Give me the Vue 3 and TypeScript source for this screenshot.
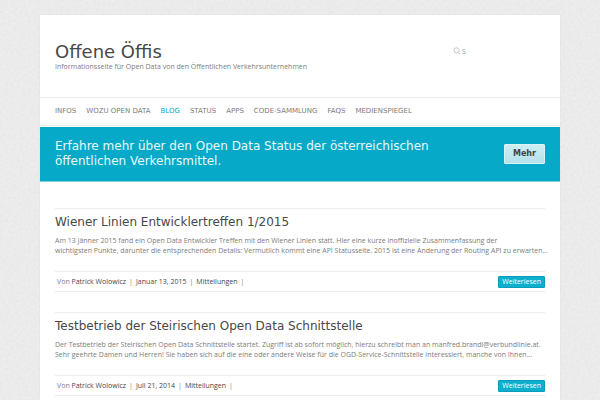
<script setup lang="ts">
import { ref } from 'vue'

interface NavItem {
  label: string
  active?: boolean
}

interface Post {
  title: string
  lines: string[]
  author: string
  date: string
  category: string
}

const query = ref('')

const nav: NavItem[] = [
  { label: 'Infos' },
  { label: 'Wozu Open Data' },
  { label: 'Blog', active: true },
  { label: 'Status' },
  { label: 'Apps' },
  { label: 'Code-Sammlung' },
  { label: 'FAQs' },
  { label: 'Medienspiegel' },
]

const posts: Post[] = [
  {
    title: 'Wiener Linien Entwicklertreffen 1/2015',
    lines: [
      'Am 13 Jänner 2015 fand ein Open Data Entwickler Treffen mit den Wiener Linien statt. Hier eine kurze inoffizielle Zusammenfassung der',
      'wichtigsten Punkte, darunter die entsprechenden Details: Vermutlich kommt eine API Statusseite. 2015 ist eine Änderung der Routing API zu erwarten…',
    ],
    author: 'Patrick Wolowicz',
    date: 'Januar 13, 2015',
    category: 'Mitteilungen',
  },
  {
    title: 'Testbetrieb der Steirischen Open Data Schnittstelle',
    lines: [
      'Der Testbetrieb der Steirischen Open Data Schnittstelle startet. Zugriff ist ab sofort möglich, hierzu schreibt man an manfred.brandl@verbundlinie.at.',
      'Sehr geehrte Damen und Herren! Sie haben sich auf die eine oder andere Weise für die OGD-Service-Schnittstelle interessiert, manche von Ihnen…',
    ],
    author: 'Patrick Wolowicz',
    date: 'Juli 21, 2014',
    category: 'Mitteilungen',
  },
]
</script>

<template>
  <div class="backdrop">
    <svg class="paper" aria-hidden="true">
      <filter id="grain" x="0" y="0" width="100%" height="100%" color-interpolation-filters="sRGB">
        <feTurbulence type="fractalNoise" baseFrequency="0.35" numOctaves="2" seed="4" />
        <feColorMatrix values="0.04 0 0 0 0.9  0.04 0 0 0 0.9  0.04 0 0 0 0.9  0 0 0 0 1" />
      </filter>
      <rect width="100%" height="100%" filter="url(#grain)" />
    </svg>
    <div class="page">
      <header class="masthead">
        <div>
          <h1><a href="#">Offene Öffis</a></h1>
          <p class="tagline">Informationsseite für Open Data von den Öffentlichen Verkehrsunternehmen</p>
        </div>
        <form class="search" role="search" @submit.prevent>
          <label for="search">
            <svg viewBox="0 0 8 8" aria-label="Suche">
              <circle cx="3.5" cy="3.4" r="2.6" />
              <path d="M5.3 5.4 7 7.3" />
            </svg>
          </label>
          <input id="search" v-model="query" type="text" placeholder="S" />
        </form>
      </header>

      <nav class="menu">
        <a v-for="item in nav" :key="item.label" href="#" :class="{ active: item.active }">{{ item.label }}</a>
      </nav>

      <section class="banner">
        <p>Erfahre mehr über den Open Data Status der österreichischen öffentlichen Verkehrsmittel.</p>
        <a class="more" href="#">Mehr</a>
      </section>

      <main>
        <article v-for="post in posts" :key="post.title">
          <h2><a href="#">{{ post.title }}</a></h2>
          <p class="excerpt">
            <span v-for="line in post.lines" :key="line">{{ line }}</span>
          </p>
          <footer>
            <div class="meta">
              <span>Von <a href="#">{{ post.author }}</a></span>
              <i>|</i>
              <a href="#">{{ post.date }}</a>
              <i>|</i>
              <a href="#">{{ post.category }}</a>
              <i>|</i>
            </div>
            <a class="read" href="#">Weiterlesen</a>
          </footer>
        </article>
      </main>
    </div>
  </div>
</template>

<style>
body {
  background: #ebebeb;
}
</style>

<style scoped>
.backdrop {
  position: relative;
  display: flow-root;
  min-height: 100vh;
  box-sizing: border-box;
  padding: 15px 40px 0;
  font-family: 'Open Sans', 'DejaVu Sans', sans-serif;
  font-size: 7px;
  color: #7c7c7c;
}
.paper {
  position: absolute;
  inset: 0;
  width: 100%;
  height: 100%;
}
.page {
  position: relative;
  min-height: 385px;
  background: #fff;
  box-shadow: 0 0 2px rgba(0, 0, 0, 0.05);
}
a {
  color: inherit;
  text-decoration: none;
}
h1,
h2,
p {
  margin: 0;
  font-weight: normal;
}
h1,
h2,
.menu,
.banner {
  font-family: 'DejaVu Sans', sans-serif;
}
.masthead {
  display: flex;
  justify-content: space-between;
  padding: 26px 15px 26px;
}
h1 {
  font-size: 18px;
  line-height: 21px;
  color: #484848;
}
.tagline {
  line-height: 9px;
}
.search {
  display: flex;
  align-items: center;
  gap: 1px;
  width: 92px;
  height: 20px;
}
.search label {
  display: flex;
}
.search svg {
  width: 8px;
  height: 8px;
  fill: none;
  stroke: #bbb;
  stroke-width: 0.8;
}
.search input {
  width: 24px;
  padding: 0;
  border: 0;
  background: none;
  font: inherit;
  color: #777;
}
.search input::placeholder {
  color: #999;
}
.menu {
  display: flex;
  gap: 10px;
  padding: 0 15px;
  border-top: 1px solid #ececec;
  border-bottom: 1px solid #ececec;
  line-height: 27px;
  text-transform: uppercase;
}
.menu .active {
  color: #06a9c8;
}
.banner {
  display: flex;
  align-items: center;
  justify-content: space-between;
  margin-top: 1px;
  padding: 12px 15px;
  background: #06a9c8;
  border-bottom: 1px solid #7fd0e0;
  color: #e8f9fc;
}
.banner p {
  max-width: 380px;
  font-size: 12px;
  line-height: 15px;
}
.more {
  padding: 0 8px;
  border: 1px solid #d9f3f7;
  border-radius: 1px;
  background: linear-gradient(#cdeef3, #b4e2ea);
  font-size: 8px;
  line-height: 18px;
  font-weight: bold;
  color: #444;
}
main {
  padding: 26px 15px 0;
}
article {
  padding-top: 4px;
  border-top: 1px solid #ececec;
}
article + article {
  margin-top: 20px;
}
h2 {
  font-size: 12px;
  line-height: 18px;
  color: #484848;
}
.excerpt {
  margin: 5px 0 15px;
  line-height: 10px;
}
.excerpt span {
  display: block;
  white-space: nowrap;
}
footer {
  display: flex;
  align-items: center;
  justify-content: space-between;
  height: 19px;
  padding-left: 2px;
  border-top: 1px solid #ececec;
  border-bottom: 1px solid #ececec;
}
.meta {
  display: flex;
  gap: 3px;
}
.meta i {
  font-style: normal;
}
.meta a {
  color: #484848;
}
.read {
  padding: 0 3px;
  border: 1px solid #0a9cb9;
  border-radius: 1px;
  background: #0cafce;
  line-height: 10px;
  color: #fff;
}
</style>
